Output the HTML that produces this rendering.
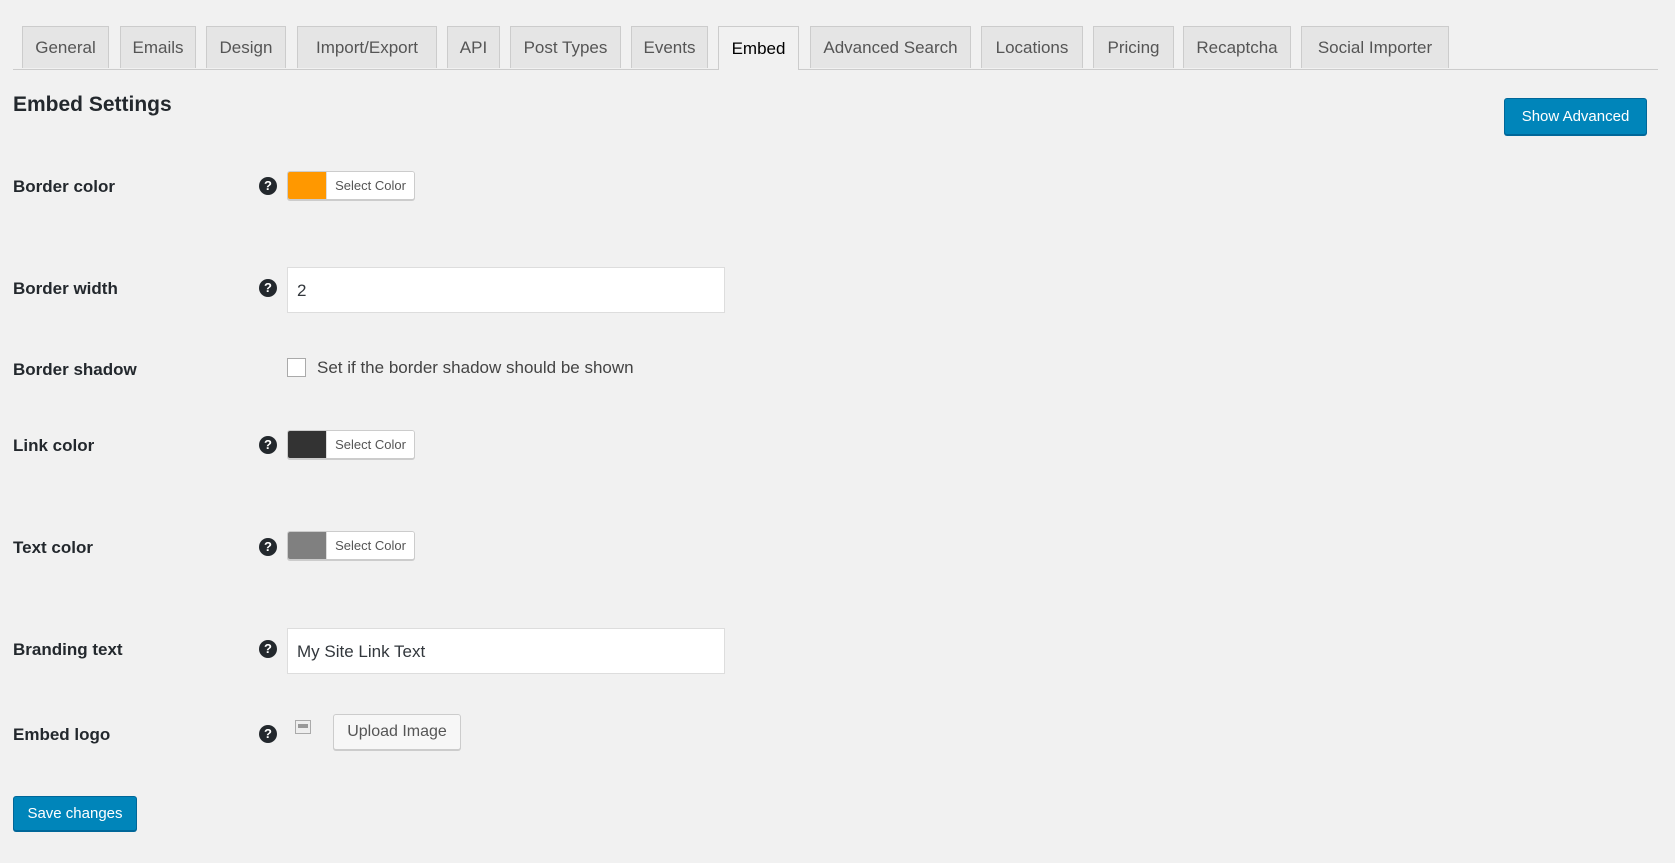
<!DOCTYPE html>
<html><head><style>
body{margin:0;background:#f1f1f1;width:1675px;height:863px;position:relative;font-family:"Liberation Sans",sans-serif;color:#23282d;overflow:hidden}
.a{position:absolute}
.tab{position:absolute;top:26px;height:42px;background:#e5e5e5;border:1px solid #ccc;border-bottom:none;box-sizing:border-box;font-size:17px;color:#555;display:flex;align-items:center;justify-content:center;white-space:nowrap}
.tab.on{background:#f1f1f1;color:#000;height:44px}
.line{position:absolute;left:13px;top:69px;width:1645px;height:1px;background:#ccc}
.lbl{position:absolute;left:13px;font-size:17px;font-weight:bold;color:#23282d}
.q{position:absolute;left:259px;width:18px;height:18px;border-radius:50%;background:#23282d;color:#fff;font-size:13px;font-weight:bold;text-align:center;line-height:18px}
.cp{position:absolute;left:287px;width:128px;height:29px;border:1px solid #ccc;border-radius:3px;background:#f7f7f7;box-sizing:border-box;box-shadow:0 1px 0 #ccc;overflow:hidden}
.cp .s{position:absolute;left:0;top:0;bottom:0;width:38px}
.cp .t{position:absolute;left:38px;right:0;top:0;bottom:0;background:#fff;font-size:13px;color:#555;text-align:center;line-height:27px;border-left:1px solid #ddd}
.in{position:absolute;left:287px;width:438px;height:46px;background:#fff;border:1px solid #ddd;box-sizing:border-box;font-size:17px;color:#32373c;padding-left:9px;line-height:46px}
.btn{position:absolute;border-radius:3px;box-sizing:border-box;display:flex;align-items:center;justify-content:center;font-size:15px}
</style></head><body>
<div class="line"></div>
<div class="tab" style="left:22px;width:87px">General</div>
<div class="tab" style="left:120px;width:76px">Emails</div>
<div class="tab" style="left:206px;width:80px">Design</div>
<div class="tab" style="left:297px;width:140px">Import/Export</div>
<div class="tab" style="left:447px;width:53px">API</div>
<div class="tab" style="left:510px;width:111px">Post Types</div>
<div class="tab" style="left:631px;width:77px">Events</div>
<div class="tab on" style="left:718px;width:81px">Embed</div>
<div class="tab" style="left:810px;width:161px">Advanced Search</div>
<div class="tab" style="left:981px;width:102px">Locations</div>
<div class="tab" style="left:1093px;width:81px">Pricing</div>
<div class="tab" style="left:1183px;width:108px">Recaptcha</div>
<div class="tab" style="left:1301px;width:148px">Social Importer</div>

<div class="a" style="left:13px;top:93px;font-size:21px;font-weight:bold;color:#23282d">Embed Settings</div>
<div class="btn" style="left:1504px;top:98px;width:143px;height:37px;background:#0085ba;border:1px solid #006799;color:#fff;box-shadow:0 1px 0 #006799">Show Advanced</div>

<div class="lbl" style="top:177px">Border color</div><div class="q" style="top:177px">?</div>
<div class="cp" style="top:171px"><div class="s" style="background:#ff9800"></div><div class="t">Select Color</div></div>

<div class="lbl" style="top:279px">Border width</div><div class="q" style="top:279px">?</div>
<div class="in" style="top:267px">2</div>

<div class="lbl" style="top:360px">Border shadow</div>
<div class="a" style="left:287px;top:358px;width:19px;height:19px;background:#fff;border:1px solid #aaa;box-sizing:border-box"></div>
<div class="a" style="left:317px;top:358px;font-size:17px;color:#444">Set if the border shadow should be shown</div>

<div class="lbl" style="top:436px">Link color</div><div class="q" style="top:436px">?</div>
<div class="cp" style="top:430px"><div class="s" style="background:#333"></div><div class="t">Select Color</div></div>

<div class="lbl" style="top:538px">Text color</div><div class="q" style="top:538px">?</div>
<div class="cp" style="top:531px"><div class="s" style="background:#808080"></div><div class="t">Select Color</div></div>

<div class="lbl" style="top:640px">Branding text</div><div class="q" style="top:640px">?</div>
<div class="in" style="top:628px">My Site Link Text</div>

<div class="lbl" style="top:725px">Embed logo</div><div class="q" style="top:725px">?</div>
<div class="a" style="left:295px;top:720px;width:16px;height:14px;border:1px solid #aaa;background:#eee;box-sizing:border-box"><div style="margin:3px 2px;height:4px;background:#999"></div></div>
<div class="btn" style="left:333px;top:714px;width:128px;height:36px;background:#f7f7f7;border:1px solid #ccc;color:#555;box-shadow:0 1px 0 #ccc;font-size:16px">Upload Image</div>

<div class="btn" style="left:13px;top:796px;width:124px;height:35px;background:#0085ba;border:1px solid #006799;color:#fff;box-shadow:0 1px 0 #006799">Save changes</div>
</body></html>
